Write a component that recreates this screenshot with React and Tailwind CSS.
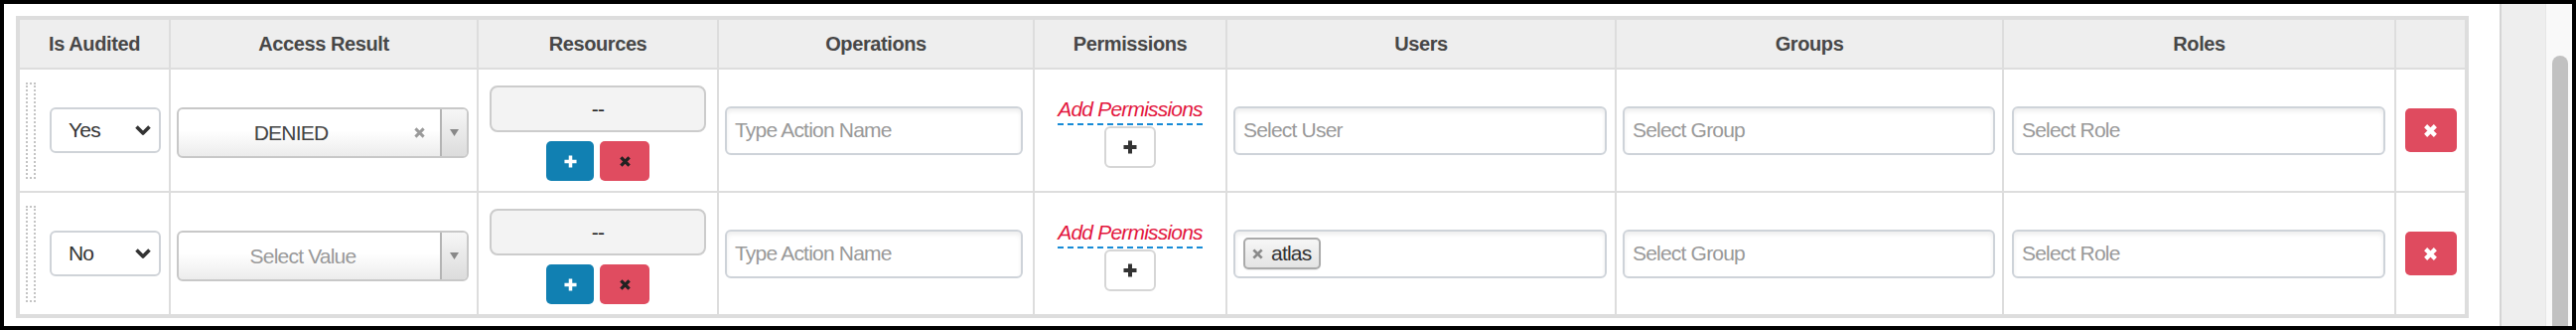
import React from "react";

const GRID =
  "grid grid-cols-[152px_310px_242px_318px_194px_392px_390px_395px_69px]";
const CELL = "border-r-2 border-[#dddddd]";

function PlusIcon({ color = "#fff", size = 14, stroke = 4 }) {
  return (
    <svg width={size} height={size} viewBox="0 0 14 14">
      <path d="M7 0.5v13M0.5 7h13" stroke={color} strokeWidth={stroke} />
    </svg>
  );
}

function XIcon({ color = "#222", size = 12, stroke = 3.6 }) {
  return (
    <svg width={size} height={size} viewBox="0 0 12 12">
      <path d="M1.5 1.5l9 9M10.5 1.5l-9 9" stroke={color} strokeWidth={stroke} />
    </svg>
  );
}

function YesNoSelect({ value }) {
  return (
    <div className="ml-[14px] flex h-[46px] w-[112px] items-center justify-between rounded-[6px] border-2 border-[#cfd3d8] bg-white pl-[17px] pr-[7px] text-[#333]">
      <span>{value}</span>
      <svg width="18" height="12" viewBox="0 0 18 12">
        <path
          d="M2.5 2.5l6.5 6.5 6.5-6.5"
          fill="none"
          stroke="#333"
          strokeWidth="3.6"
          strokeLinejoin="round"
        />
      </svg>
    </div>
  );
}

function AccessSelect({ value }) {
  return (
    <div className="flex h-[51px] w-[294px] overflow-hidden rounded-[6px] border-2 border-[#c8c8c8] bg-[linear-gradient(to_bottom,#ffffff_0%,#ffffff_45%,#ececec_100%)]">
      {value ? (
        <div className="flex flex-1 items-center pl-[8px]">
          <span className="flex-1 text-center text-[#444]">{value}</span>
          <span className="ml-[18px] mr-[15px] flex w-[12px] justify-center">
            <XIcon color="#9a9a9a" size={11} stroke={3.2} />
          </span>
        </div>
      ) : (
        <div className="flex flex-1 items-center pl-[8px] pr-[21px]">
          <span className="flex-1 text-center text-[#999]">Select Value</span>
        </div>
      )}
      <div className="flex w-[27px] items-center justify-center border-l-2 border-[#b4b4b4] bg-[linear-gradient(to_bottom,#f6f6f6,#dcdcdc)]">
        <svg width="9" height="7" viewBox="0 0 9 7">
          <path d="M0 0h9L4.5 7z" fill="#888" />
        </svg>
      </div>
    </div>
  );
}

function TextBox({ placeholder, children }) {
  return (
    <div className="flex h-[49px] w-full items-center rounded-[6px] border-2 border-[#ced3d9] bg-white px-[8px] shadow-[inset_0_3px_4px_rgba(0,0,0,0.07)]">
      {children ? children : <span className="text-[#999]">{placeholder}</span>}
    </div>
  );
}

function Row({ audited, access, user, last }) {
  const rowCls = last ? "h-[122px]" : "h-[124px] border-b-2 border-[#dddddd]";
  return (
    <div className={`${GRID} ${rowCls}`}>
      {/* is audited */}
      <div className={`${CELL} flex items-center pl-[6px]`}>
        <div className="h-[97px] w-[10px] border-2 border-dotted border-[#c4c4c4]" />
        <YesNoSelect value={audited} />
      </div>

      {/* access result */}
      <div className={`${CELL} flex items-center pl-[6px] pt-[5px]`}>
        <AccessSelect value={access} />
      </div>

      {/* resources */}
      <div className={`${CELL} flex flex-col items-center justify-center pt-[6px]`}>
        <div className="flex h-[47px] w-[218px] items-center justify-center rounded-[8px] border-2 border-[#cccccc] bg-[#f3f3f3] text-[#222]">
          --
        </div>
        <div className="mt-[9px] flex gap-[6px]">
          <button className="flex h-[40px] w-[48px] items-center justify-center rounded-[5px] bg-[#1180b2]">
            <PlusIcon color="#fff" size={13} stroke={3.8} />
          </button>
          <button className="flex h-[40px] w-[50px] items-center justify-center rounded-[5px] bg-[#e04c60]">
            <XIcon color="#222" size={11} stroke={3.6} />
          </button>
        </div>
      </div>

      {/* operations */}
      <div className={`${CELL} flex items-center pl-[6px] pr-[10px]`}>
        <TextBox placeholder="Type Action Name" />
      </div>

      {/* permissions */}
      <div className={`${CELL} flex flex-col items-center justify-center pt-[5px]`}>
        <div className="flex flex-col">
          <span className="pb-[2px] leading-[24px] italic text-[#e3173e]">Add Permissions</span>
          <div className="h-[2px] w-full bg-[repeating-linear-gradient(to_right,#178bd6_0px,#178bd6_6px,transparent_6px,transparent_10px)]" />
        </div>
        <button className="mt-[1px] flex h-[42px] w-[52px] items-center justify-center rounded-[6px] border-2 border-[#d6d6d6] bg-white">
          <PlusIcon color="#333" size={14} stroke={4} />
        </button>
      </div>

      {/* users */}
      <div className={`${CELL} flex items-center pl-[6px] pr-[8px]`}>
        {user ? (
          <TextBox>
            <span className="flex h-[32px] items-center gap-[8px] rounded-[5px] border-2 border-[#aaaaaa] bg-[linear-gradient(to_bottom,#f6f6f6,#e4e4e4)] pl-[7px] pr-[8px] text-[#333] shadow-[0_1px_1px_rgba(0,0,0,0.08)]">
              <XIcon color="#8a8a8a" size={11} stroke={3} />
              {user}
            </span>
          </TextBox>
        ) : (
          <TextBox placeholder="Select User" />
        )}
      </div>

      {/* groups */}
      <div className={`${CELL} flex items-center pl-[6px] pr-[7px]`}>
        <TextBox placeholder="Select Group" />
      </div>

      {/* roles */}
      <div className={`${CELL} flex items-center pl-[8px] pr-[9px]`}>
        <TextBox placeholder="Select Role" />
      </div>

      {/* delete */}
      <div className="flex items-center justify-center">
        <button className="flex h-[44px] w-[52px] items-center justify-center rounded-[5px] bg-[#df4b5f]">
          <XIcon color="#fff" size={13} stroke={4} />
        </button>
      </div>
    </div>
  );
}

const headers = [
  "Is Audited",
  "Access Result",
  "Resources",
  "Operations",
  "Permissions",
  "Users",
  "Groups",
  "Roles",
  "",
];

export default function App() {
  return (
    <div className="flex h-[332px] w-[2594px] border-4 border-black bg-white font-['Liberation_Sans',Arial,sans-serif] text-[21px] tracking-[-0.8px]">
      <div className="w-[2513px] pl-[12px] pt-[12px]">
        <div className="w-[2470px] border-4 border-[#dddddd]">
          <div className={`${GRID} h-[50px] border-b-2 border-[#dddddd] bg-[#eeeeee]`}>
            {headers.map((h, i) => (
              <div
                key={i}
                className={`flex items-center justify-center text-[20px] font-bold tracking-[-0.4px] text-[#474747] ${
                  i < headers.length - 1 ? CELL : ""
                }`}
              >
                {h}
              </div>
            ))}
          </div>
          <Row audited="Yes" access="DENIED" />
          <Row audited="No" access="" user="atlas" last />
        </div>
      </div>

      {/* right side panel + scrollbar */}
      <div className="w-[2px] bg-[#d5d5d5]" />
      <div className="w-[44px] bg-[#eeeeee]" />
      <div className="w-[27px] border-l border-[#e6e6e6] bg-[#f9f9f9] pl-[6px] pt-[52px]">
        <div className="h-full w-[16px] rounded-t-full bg-[#c1c1c1]" />
      </div>
    </div>
  );
}
